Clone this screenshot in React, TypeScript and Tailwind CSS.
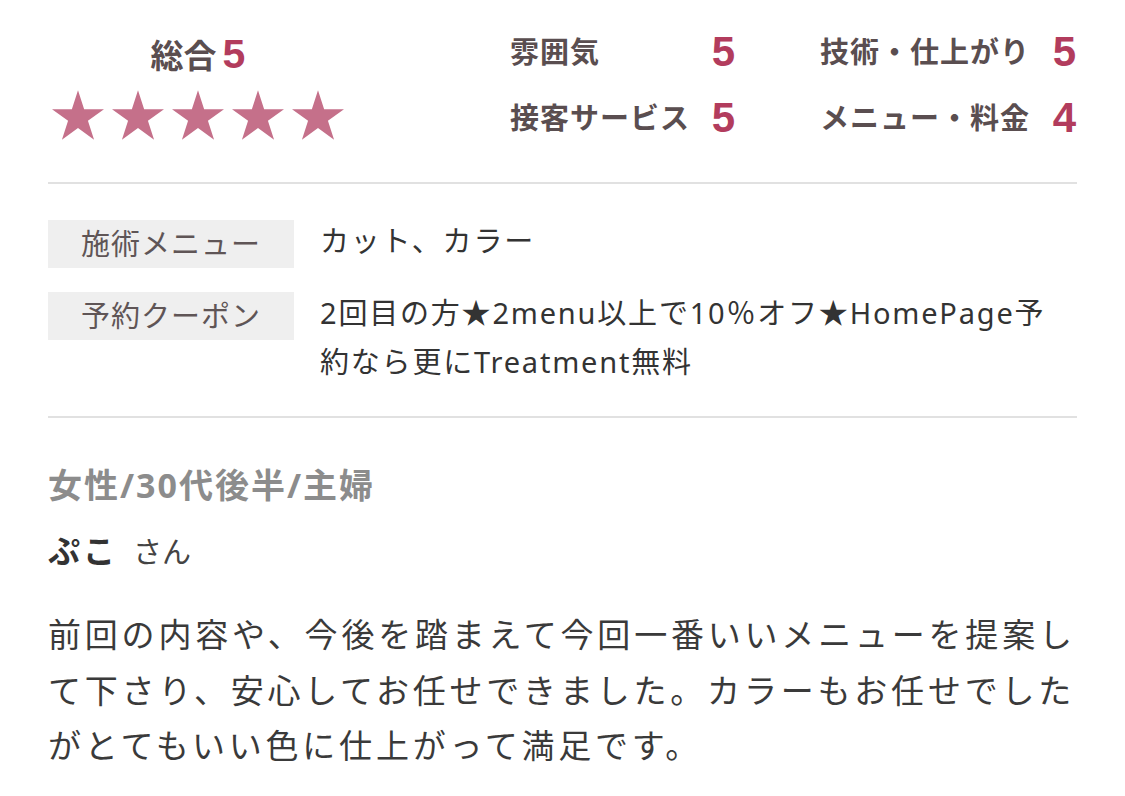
import React from 'react';

const jp = { fontFamily: '"Noto Sans", "Noto Sans CJK JP", sans-serif' };
const num = { fontFamily: '"Liberation Sans", Arial, sans-serif' };

function Star() {
    return (
        <svg viewBox="2.45 0 95.1 90.45" className="w-[52px] h-[50px]" aria-hidden>
            <polygon
                fill="#c5708a"
                points="50,0 61.23,34.55 97.55,34.55 68.17,55.9 79.39,90.45 50,69.1 20.61,90.45 31.83,55.9 2.45,34.55 38.77,34.55"
            />
        </svg>
    );
}

function Score({ label, value }: { label: string; value: number }) {
    return (
        <div className="flex items-center justify-between h-[66px]">
            <span className="text-[29px] font-bold tracking-[1px] text-[#5a4e50]">{label}</span>
            <span className="text-[42px] font-bold text-[#b23c5d] leading-none" style={num}>{value}</span>
        </div>
    );
}

// one row of the treatment info table
function InfoRow({ label, children }: { label: string; children: React.ReactNode }) {
    return (
        <div className="flex items-start gap-[26px]">
            <div className="w-[246px] h-[48px] shrink-0 bg-[#efefef] flex items-center justify-center text-[29px] tracking-[1px] text-[#5f5556]">
                {label}
            </div>
            <div className="flex-1 text-[29px] leading-[49px] tracking-[1.8px] text-[#333] -mt-[4px] whitespace-nowrap">{children}</div>
        </div>
    );
}

export default function App() {
    return (
        <div className="w-[1125px] h-[796px] bg-white px-[48px] overflow-hidden" style={jp}>
            {/* ratings */}
            <div className="flex h-[182px] pt-[19px]">
                <div className="w-[300px] flex flex-col items-center pt-[11px]">
                    <div className="flex items-baseline leading-[48px]">
                        <span className="text-[33px] font-bold text-[#5a4e50]">総合</span>
                        <span className="text-[41px] font-bold text-[#b23c5d] ml-[6px]" style={num}>5</span>
                    </div>
                    <div className="flex gap-[8px] mt-[10px]">
                        {[0, 1, 2, 3, 4].map((i) => <Star key={i} />)}
                    </div>
                </div>
                <div className="ml-[162px] grid grid-cols-[225px_256px] content-start gap-x-[85px]">
                    <Score label="雰囲気" value={5} />
                    <Score label="技術・仕上がり" value={5} />
                    <Score label="接客サービス" value={5} />
                    <Score label="メニュー・料金" value={4} />
                </div>
            </div>
            <div className="h-[2px] bg-[#e1e1e1]" />

            {/* treatment info */}
            <div className="flex flex-col gap-[24px] pt-[36px] pb-[30px]">
                <InfoRow label="施術メニュー">カット、カラー</InfoRow>
                <InfoRow label="予約クーポン">
                    2回目の方★2menu以上で10％オフ★HomePage予<br />約なら更にTreatment無料
                </InfoRow>
            </div>
            <div className="h-[2px] bg-[#e1e1e1]" />

            {/* review */}
            <div className="pt-[43px]">
                <p className="text-[34px] font-bold leading-[48px] tracking-[2px] text-[#8c8c8c]">女性/30代後半/主婦</p>
                <p className="mt-[18px] leading-[48px] text-[#333]">
                    <span className="text-[32px] font-bold tracking-[3px]">ぷこ</span>
                    <span className="text-[29px] ml-[15px] text-[#444]">さん</span>
                </p>
                <p className="mt-[26px] text-[33px] leading-[55.5px] tracking-[3.8px] text-[#3a3a3a] whitespace-nowrap">
                    前回の内容や、今後を踏まえて今回一番いいメニューを提案し<br />
                    て下さり、安心してお任せできました。カラーもお任せでした<br />
                    がとてもいい色に仕上がって満足です。
                </p>
            </div>
        </div>
    );
}
